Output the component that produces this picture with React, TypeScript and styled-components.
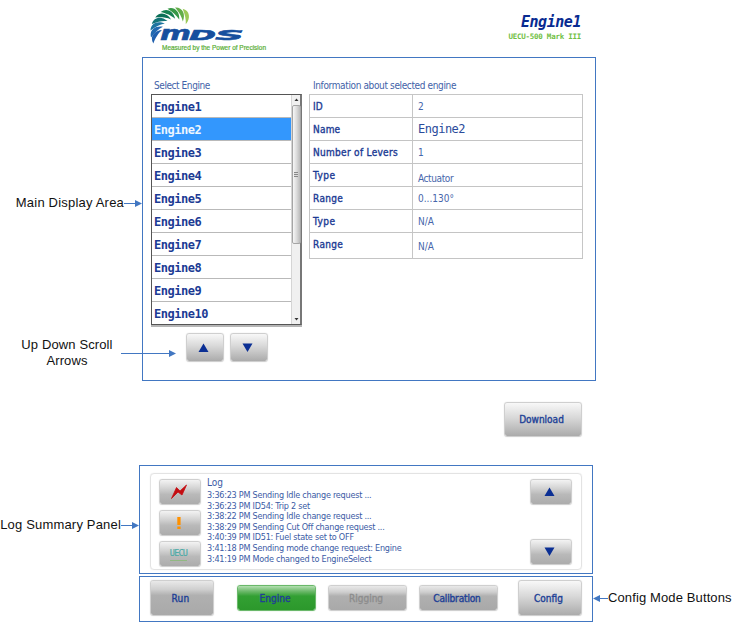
import React from 'react';
import styled, { createGlobalStyle, css } from 'styled-components';

const GlobalStyle = createGlobalStyle`
  * { box-sizing: border-box; }
  body { margin: 0; background: #fff; overflow: hidden; }
`;

const UI = `'DejaVu Sans Condensed', 'DejaVu Sans', sans-serif`;
const MONO = `'DejaVu Sans Mono', monospace`;
const BLUE = '#4277c2';
const NAVY = '#1c3b94';

const Page = styled.div`
  width: 732px;
  height: 622px;
  display: flex;
  flex-direction: column;
  background: #fff;
  font-family: ${UI};
  font-stretch: condensed;
  color: ${NAVY};
`;

const Header = styled.header`
  height: 57px;
  padding: 6px 151px 0 150px;
  display: flex;
  justify-content: space-between;
`;

const Heading = styled.div`
  display: flex;
  flex-direction: column;
  align-items: flex-end;
  padding-top: 7px;
`;

const EngineTitle = styled.h1`
  margin: 0;
  font: italic bold 15px/18px ${MONO};
  color: #082b91;
  letter-spacing: -0.45px;
`;

const Model = styled.div`
  font: bold 7.5px/11px ${MONO};
  color: #6fc043;
  letter-spacing: -0.25px;
`;

const Band = styled.div<{ $h: number; $gap?: number }>`
  display: flex;
  height: ${p => p.$h}px;
  margin-top: ${p => p.$gap ?? 0}px;
`;

const Side = styled.div<{ $w: number; $top: number }>`
  width: ${p => p.$w}px;
  flex: none;
  display: flex;
  flex-direction: column;
  padding-top: ${p => p.$top}px;
`;

const Callout = styled.div<{ $start?: boolean; $ls?: number }>`
  display: flex;
  justify-content: ${p => (p.$start ? 'flex-start' : 'flex-end')};
  align-items: center;
  height: 16px;
  font: 13px/16px 'Liberation Sans', Arial, sans-serif;
  color: #111;
  white-space: nowrap;
  letter-spacing: ${p => p.$ls ?? 0.12}px;
`;

const CenteredCallout = styled(Callout)`
  display: block;
  height: 32px;
  width: 134px;
  margin-top: 126px;
  text-align: center;
  white-space: normal;
  padding: 0 18px;
`;

const Arrow = styled.svg`
  display: block;
  flex: none;
`;

const CrossingArrow = styled(Arrow)`
  position: absolute;
  left: -22px;
  top: 291px;
`;

const Panel = styled.section`
  position: relative;
  width: 454px;
  flex: none;
  border: 1px solid ${BLUE};
`;

const MainPanel = styled(Panel)`
  display: grid;
  grid-template-columns: 151px 274px;
  column-gap: 7px;
  align-items: start;
  padding: 19px 0 0 8px;
`;

const Caption = styled.div<{ $ls: number; $indent: number }>`
  height: 17px;
  padding-left: ${p => p.$indent}px;
  font-size: 10px;
  line-height: 17px;
  letter-spacing: ${p => p.$ls}px;
  color: #4262a8;
  white-space: nowrap;
`;

const ListBox = styled.div`
  display: flex;
  height: 231px;
  border: 1px solid #555;
  border-right-width: 2px;
  border-right-color: #777;
  box-shadow: 0 2px 0 #b5b5b5;
`;

const Items = styled.div`
  width: 139px;
  height: 229px;
  overflow: hidden;
`;

const Item = styled.div<{ $on?: boolean }>`
  height: 23px;
  padding: 1px 0 0 2px;
  border-bottom: 1px solid #b9b9b9;
  font: bold 12px/22px ${MONO};
  letter-spacing: -0.47px;
  color: ${p => (p.$on ? '#eef6ff' : NAVY)};
  background: ${p => (p.$on ? '#3397fd' : '#fff')};
  &:last-child { border-bottom: 0; }
`;

const ScrollTrack = styled.div`
  width: 9px;
  display: flex;
  flex-direction: column;
  justify-content: space-between;
  align-items: center;
  background: #f0f0f0;
  border-left: 1px solid #d5d5d5;
`;

const ScrollTip = styled.svg`
  height: 10px;
  width: 9px;
  flex: none;
`;

const Thumb = styled.div`
  height: 139px;
  width: 9px;
  margin-bottom: auto;
  border: 1px solid #a5a5a5;
  border-radius: 2px;
  background: linear-gradient(90deg, #f7f7f7, #dcdcdc 50%, #bbb);
  display: flex;
  align-items: center;
  justify-content: center;
`;

const Grip = styled.div`
  width: 4px;
  height: 5px;
  background: repeating-linear-gradient(#888 0 1px, #ddd 1px 2px);
`;

const Info = styled.div`
  display: grid;
  grid-template-columns: 103px 170px;
  grid-template-rows: repeat(6, 23px) 26px;
  width: 274px;
  border: 1px solid #c6c6c6;
  border-bottom-width: 0;
`;

const Cell = styled.div<{ $drop?: number; $ls?: number }>`
  border-bottom: 1px solid #c4c4c4;
  padding-top: ${p => p.$drop ?? 0}px;
  line-height: 23px;
  white-space: nowrap;
  letter-spacing: ${p => p.$ls ?? 0}px;
`;

const Key = styled(Cell)`
  border-right: 1px solid #c6c6c6;
  padding-left: 3px;
  font-size: 10px;
  color: ${NAVY};
  -webkit-text-stroke: 0.35px ${NAVY};
`;

const Value = styled(Cell)<{ $mono?: boolean }>`
  padding-left: 5px;
  font-size: 10px;
  color: #4666ab;
  ${p => p.$mono && css`
    font-family: ${MONO};
    font-size: 12px;
    letter-spacing: -0.5px;
    color: #2b4b9b;
  `}
`;

const ScrollButtons = styled.div`
  display: flex;
  gap: 6px;
  margin: 8px 0 0 35px;
`;

type Tone = 'gray' | 'glossy' | 'green' | 'soft';
const fills: Record<Tone, string> = {
  gray: 'linear-gradient(#f3f3f3, #d3d3d3 35%, #b9b9b9 60%, #acacac)',
  glossy: 'linear-gradient(#e9e9e9, #cfcfcf 25%, #b0b0b0 42%, #a9a9a9)',
  green: 'linear-gradient(#b2dfb0, #6db96b 22%, #33a033 42%, #2c982c)',
  soft: 'linear-gradient(#f8f8f8, #d8d8d8 45%, #ababab)',
};

const Button = styled.button<{ $w: number; $h: number; $tone?: Tone; $dim?: boolean; $ls?: number }>`
  display: flex;
  align-items: center;
  justify-content: center;
  flex: none;
  width: ${p => p.$w}px;
  height: ${p => p.$h}px;
  padding: 0 3px 0 0;
  border: 1px solid ${p => (p.$tone === 'green' ? '#6ab86a' : '#cfcfcf')};
  border-radius: 3px;
  background: ${p => fills[p.$tone ?? 'soft']};
  background-clip: padding-box;
  box-shadow: 0 0 1px ${p => (p.$tone === 'green' ? '#8ccb8c' : '#ccc')};
  font: 10px ${UI};
  font-stretch: condensed;
  letter-spacing: ${p => p.$ls ?? 0}px;
  color: ${p => (p.$dim ? '#8d8d8d' : '#203f96')};
  -webkit-text-stroke: 0.35px ${p => (p.$dim ? '#8d8d8d' : '#203f96')};
`;

const DownloadRow = styled.div`
  display: flex;
  justify-content: flex-end;
  padding: 21px 150px 0 0;
  height: 84px;
`;

const LogPanel = styled(Panel)`
  padding: 7px 10px 3px 10px;
`;

const LogFrame = styled.div`
  display: flex;
  height: 97px;
  border: 1px solid #e3e3e3;
  border-radius: 4px;
  padding: 5px 9px 3px 8px;
  box-shadow: 0 0 1px #ddd;
`;

const Stack = styled.div<{ $gap: number }>`
  display: flex;
  flex-direction: column;
  gap: ${p => p.$gap}px;
`;

const LogText = styled.div`
  flex: 1;
  padding-left: 6px;
  color: #3b5ba5;
`;

const LogTitle = styled.div`
  height: 11px;
  margin-top: -2px;
  margin-bottom: 2px;
  font-size: 10px;
  line-height: 11px;
`;

const LogLine = styled.div`
  height: 10.6px;
  font-size: 9px;
  line-height: 10.6px;
  white-space: nowrap;
  letter-spacing: -0.24px;
`;

const Uecu = styled.span`
  font: 8.5px/10px ${MONO};
  color: #45a9a5;
  letter-spacing: -0.8px;
  -webkit-text-stroke: 0.1px #45a9a5;
  padding-bottom: 2px;
  border-bottom: 1px solid #91b982;
`;

const ModePanel = styled(Panel)`
  display: flex;
  align-items: flex-start;
  padding: 3px 0 0 10px;
`;

const Spacer = styled.div<{ $w: number }>`
  width: ${p => p.$w}px;
  flex: none;
`;

const Lowered = styled.div`
  display: flex;
  gap: 12px;
  margin-top: 5px;
`;

/* Turbine blades, fanned around the hub from upper right to lower left. */
const blades: [number, string][] = [
  [30, '#9bc958'],
  [12, '#62ad49'],
  [-6, '#379847'],
  [-24, '#168052'],
  [-42, '#0c7058'],
  [-59, '#137477'],
  [-75, '#1d74a0'],
  [-91, '#2169b0'],
  [-106, '#1f5fae'],
];

const Logo = () => (
  <svg width="118" height="46" viewBox="0 0 118 46">
    {blades.map(([angle, fill]) => (
      <path
        key={angle}
        transform={`translate(25 26) rotate(${angle})`}
        d="M-5 -24 C2 -26 7 -20 5.5 -12 C3 -17 0 -20 -5 -24Z"
        fill={fill}
      />
    ))}
    <g fontFamily="DejaVu Sans" fontWeight="bold" fontStyle="italic" fill="#164f9e" stroke="#164f9e" strokeWidth="0.5">
      <text x="10" y="33.5" fontSize="19.5" textLength="31" lengthAdjust="spacingAndGlyphs">m</text>
      <text x="39" y="33.5" fontSize="14.5" textLength="27" lengthAdjust="spacingAndGlyphs">D</text>
      <text x="65" y="33.5" fontSize="14.5" textLength="29" lengthAdjust="spacingAndGlyphs">S</text>
    </g>
    <text x="12" y="44" fontFamily="Liberation Sans" fontSize="6.6" fill="#59ae35" stroke="#59ae35" strokeWidth="0.2" textLength="104" lengthAdjust="spacingAndGlyphs">
      Measured by the Power of Precision
    </text>
  </svg>
);

const Triangle = ({ down = false }: { down?: boolean }) => (
  <svg width="11" height="10" viewBox="0 0 11 10">
    <path d={down ? 'M0.5 0.5H10.5L5.5 9Z' : 'M0.5 9H10.5L5.5 0.5Z'} fill="#0b2f94" />
  </svg>
);

const Pointer = ({ w }: { w: number }) => (
  <Arrow width={w} height="8">
    <path d={`M0 4.5H${w - 6}`} stroke={BLUE} />
    <path d={`M${w - 7} 1L${w} 4.5L${w - 7} 8Z`} fill={BLUE} />
  </Arrow>
);

const engines = Array.from({ length: 10 }, (_, i) => `Engine${i + 1}`);

const log = [
  '3:36:23 PM Sending Idle change request ...',
  '3:36:23 PM ID54: Trip 2 set',
  '3:38:22 PM Sending Idle change request ...',
  '3:38:29 PM Sending Cut Off change request ...',
  '3:40:39 PM ID51: Fuel state set to OFF',
  '3:41:18 PM Sending mode change request: Engine',
  '3:41:19 PM Mode changed to EngineSelect',
];

export default function App() {
  return (
    <Page>
      <GlobalStyle />
      <Header>
        <Logo />
        <Heading>
          <EngineTitle>Engine1</EngineTitle>
          <Model>UECU-500 Mark III</Model>
        </Heading>
      </Header>

      <Band $h={324}>
        <Side $w={142} $top={138}>
          <Callout $ls={0.2}>Main Display Area<Pointer w={18} /></Callout>
          <CenteredCallout>Up Down Scroll Arrows</CenteredCallout>
        </Side>
        <MainPanel>
          <div>
            <Caption $ls={-0.43} $indent={3}>Select Engine</Caption>
            <ListBox>
              <Items>
                {engines.map((name, i) => (
                  <Item key={name} $on={i === 1}>{name}</Item>
                ))}
              </Items>
              <ScrollTrack>
                <ScrollTip viewBox="0 0 9 10"><path d="M2.5 6H6.5L4.5 3.5Z" fill="#333" /></ScrollTip>
                <Thumb><Grip /></Thumb>
                <ScrollTip viewBox="0 0 9 10"><path d="M2.5 4H6.5L4.5 6.5Z" fill="#333" /></ScrollTip>
              </ScrollTrack>
            </ListBox>
            <ScrollButtons>
              <Button $w={38} $h={29}><Triangle /></Button>
              <Button $w={38} $h={29}><Triangle down /></Button>
            </ScrollButtons>
          </div>
          <div>
            <Caption $ls={-0.37} $indent={4}>Information about selected engine</Caption>
            <Info>
              <Key>ID</Key><Value>2</Value>
              <Key $ls={0.2}>Name</Key><Value $mono>Engine2</Value>
              <Key $ls={0.3}>Number of Levers</Key><Value>1</Value>
              <Key $ls={0.5}>Type</Key><Value $drop={3} $ls={-0.4}>Actuator</Value>
              <Key $ls={0.35}>Range</Key><Value>0...130°</Value>
              <Key $ls={0.5}>Type</Key><Value>N/A</Value>
              <Key $ls={0.35}>Range</Key><Value $drop={2}>N/A</Value>
            </Info>
          </div>
          <CrossingArrow width="56" height="8">
            <path d="M0 4.5H49" stroke={BLUE} />
            <path d="M48 1L55 4.5L48 8Z" fill={BLUE} />
          </CrossingArrow>
        </MainPanel>
      </Band>

      <DownloadRow>
        <Button $w={78} $h={35}>Download</Button>
      </DownloadRow>

      <Band $h={109}>
        <Side $w={139} $top={52}>
          <Callout $ls={0.18}>Log Summary Panel<Pointer w={18} /></Callout>
        </Side>
        <LogPanel>
          <LogFrame>
            <Stack $gap={5}>
              <Button $w={42} $h={26} $tone="gray">
                <svg width="18" height="16" viewBox="0 0 18 16">
                  <path d="M1.5 14.5L6.500 3.5L10 7L16.5 1L12 11L8 8Z" fill="#c40d12" stroke="#c40d12" strokeWidth="0.8" />
                </svg>
              </Button>
              <Button $w={42} $h={26} $tone="gray">
                <svg width="6" height="14" viewBox="0 0 6 14">
                  <path d="M1.3 1H4.6V9H1.3ZM1.3 10.5H4.6V13H1.3Z" fill="#ff9100" />
                </svg>
              </Button>
              <Button $w={42} $h={26} $tone="gray"><Uecu>UECU</Uecu></Button>
            </Stack>
            <LogText>
              <LogTitle>Log</LogTitle>
              {log.map((text, i) => (
                <LogLine key={i}>{text}</LogLine>
              ))}
            </LogText>
            <Stack $gap={34}>
              <Button $w={42} $h={26} $tone="gray"><Triangle /></Button>
              <Button $w={42} $h={26} $tone="gray"><Triangle down /></Button>
            </Stack>
          </LogFrame>
        </LogPanel>
      </Band>

      <Band $h={46} $gap={2}>
        <Spacer $w={139} />
        <ModePanel>
          <Button $w={64} $h={36} $tone="glossy" $ls={0.2}>Run</Button>
          <Spacer $w={23} />
          <Lowered>
            <Button $w={79} $h={26} $tone="green">Engine</Button>
            <Button $w={79} $h={26} $tone="glossy" $dim>Rigging</Button>
            <Button $w={79} $h={26} $tone="glossy" $ls={-0.15}>Calibration</Button>
          </Lowered>
          <Spacer $w={20} />
          <Button $w={64} $h={36}>Config</Button>
        </ModePanel>
        <Side $w={139} $top={14}>
          <Callout $start>
            <Arrow width="15" height="8">
              <path d="M6 4.5H15" stroke={BLUE} />
              <path d="M7 1L0 4.5L7 8Z" fill={BLUE} />
            </Arrow>
            Config Mode Buttons
          </Callout>
        </Side>
      </Band>
    </Page>
  );
}
